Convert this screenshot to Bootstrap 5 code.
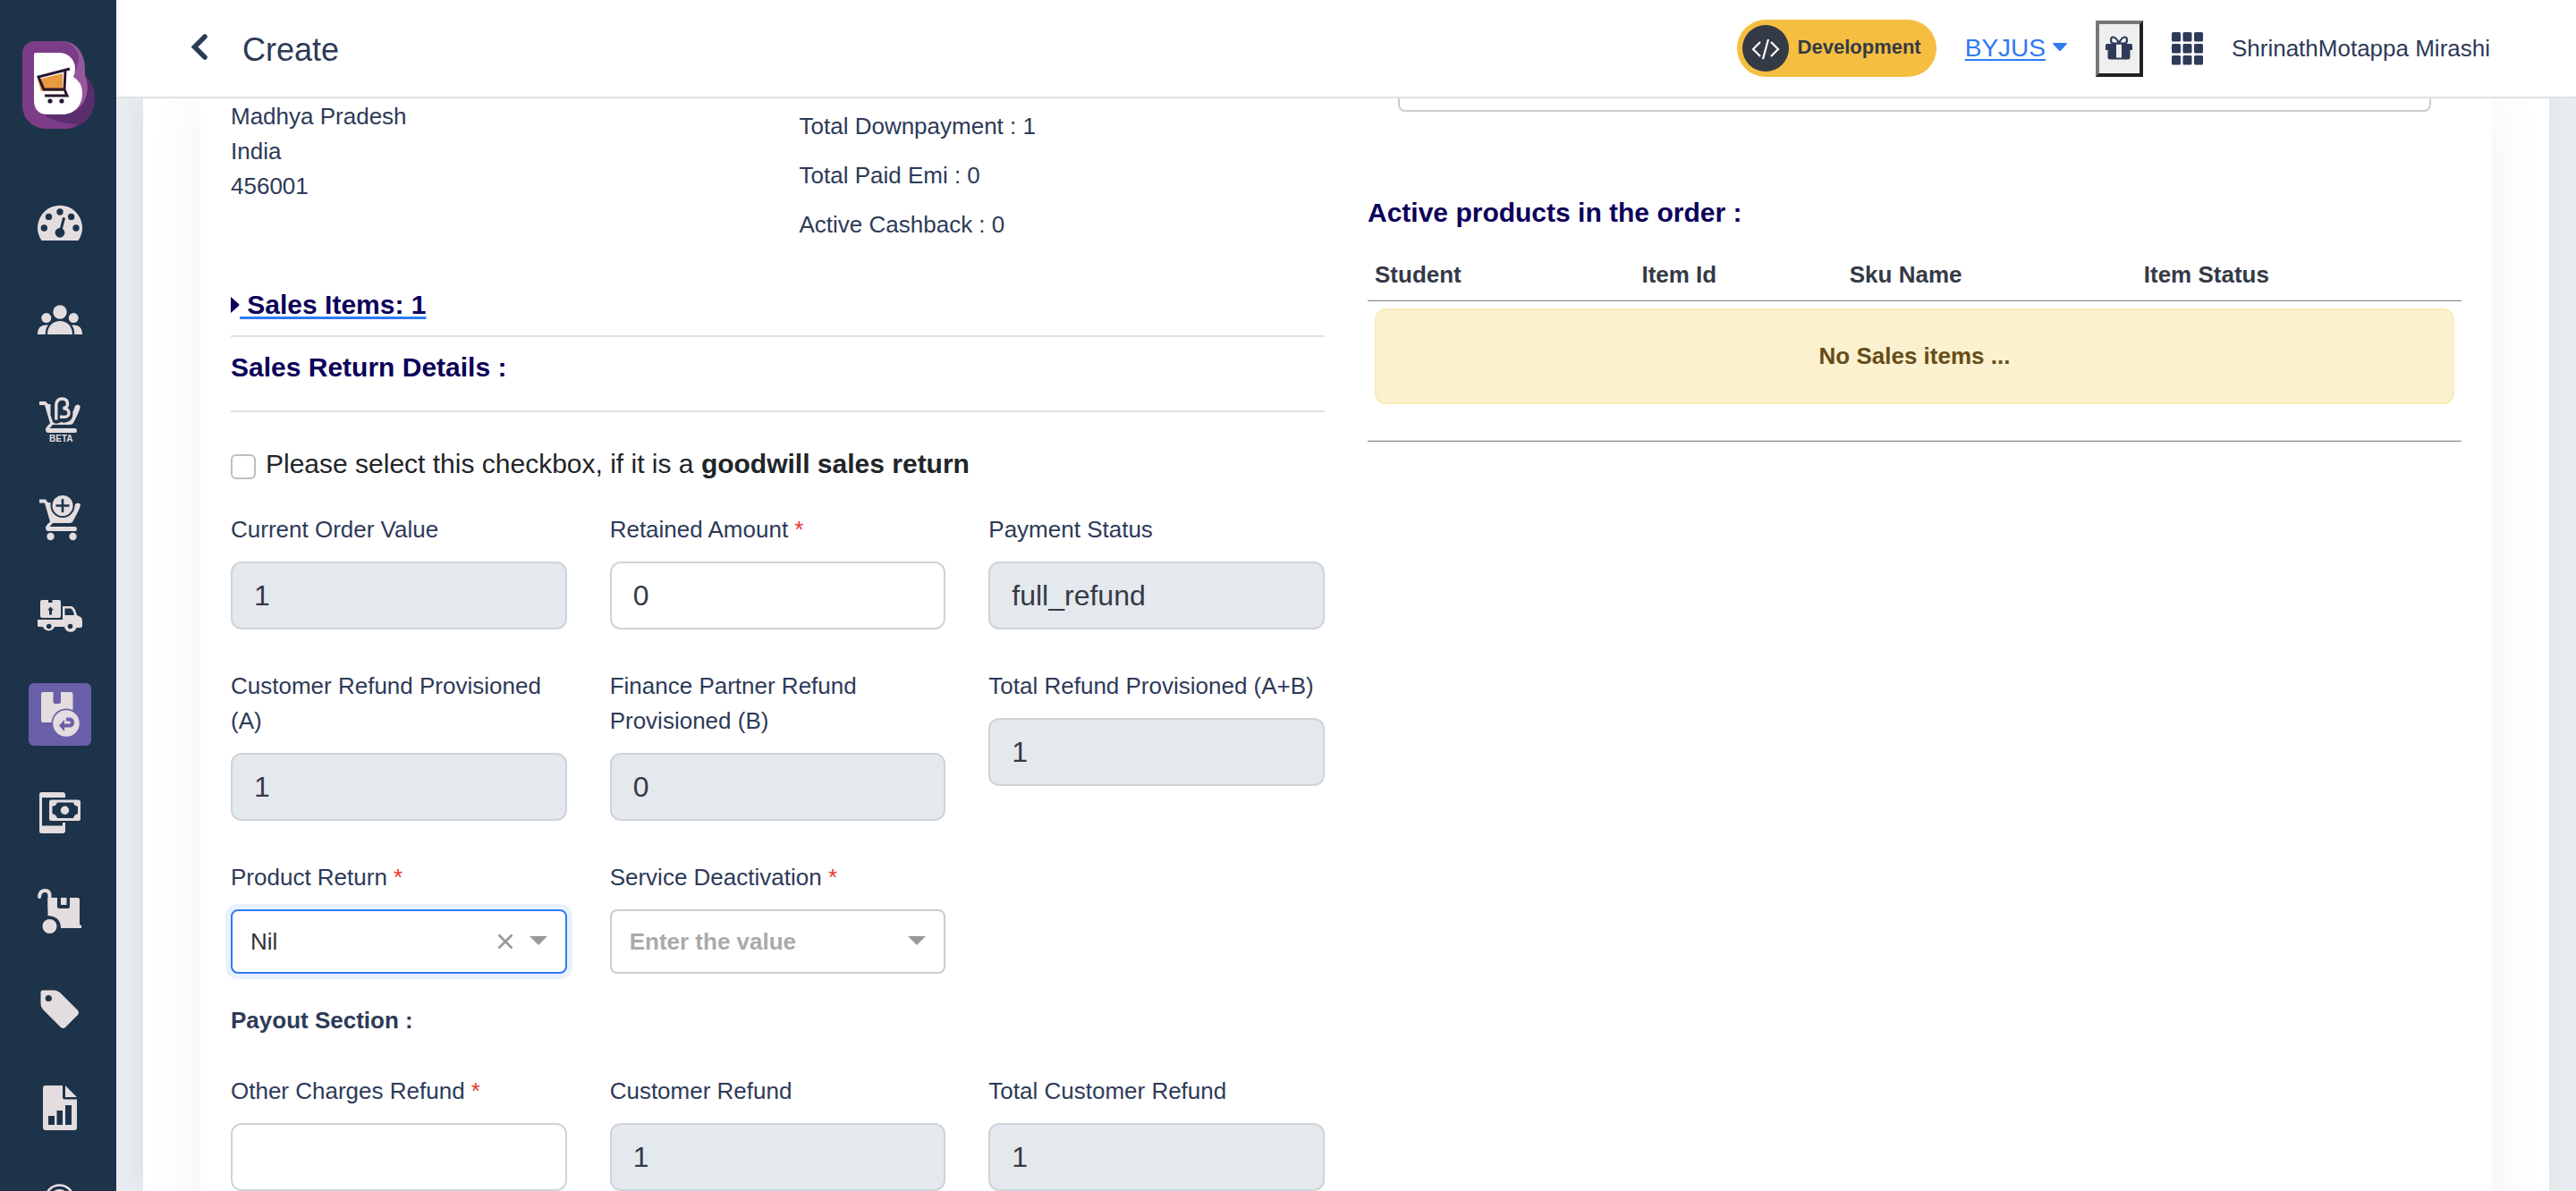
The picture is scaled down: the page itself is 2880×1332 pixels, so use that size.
<!DOCTYPE html>
<html lang="en">
<head>
<meta charset="utf-8">
<meta name="viewport" content="width=device-width, initial-scale=1">
<title>Create</title>
<link href="https://cdn.jsdelivr.net/npm/bootstrap@5.3.0/dist/css/bootstrap.min.css" rel="stylesheet">
<style>
  :root { --ink: #2d3a58; --slate: #343a46; --navy: #0c0059; --brand: #2f7af5; }
  body { font-family: "Liberation Sans", Arial, sans-serif; font-size: 26px; line-height: 39px; color: var(--ink); background: #e9edf1; }
  .side-rail { width: 130px; background: #1d334a; padding: 46px 0 0 25px; overflow: hidden; }
  .side-logo { width: 82px; height: 98px; margin-bottom: 70px; }
  .side-logo svg { display: block; }
  .rail-nav { gap: 40px; margin-left: 7px; }
  .rail-link { width: 70px; height: 70px; border-radius: 6px; display: flex; align-items: center; justify-content: center; color: #e4dddf; flex: none; }
  .rail-link.active { background: #6a5fa9; }
  .rail-link svg { width: 50px; height: 50px; fill: currentColor; overflow: visible; --hole: #1d334a; }
  .rail-link.active svg { --hole: #6a5fa9; }
  .top-bar { height: 110px; border-bottom: 2px solid #dee2e6; padding: 0 96px 0 83px; z-index: 2; }
  .page-title { font-size: 36px; line-height: 44px; margin: 4px 0 0 38px; font-weight: 400; }
  .top-tools { gap: 32px; }
  .env-pill { background: #f5be41; border-radius: 32px; height: 64px; padding: 0 17px 0 6px; gap: 10px; color: var(--slate); font-size: 22px; font-weight: 700; }
  .env-dot { width: 52px; height: 52px; border-radius: 50%; background: #343a46; display: flex; align-items: center; justify-content: center; }
  .env-pill span:last-child { margin-top: -3px; }
  .org-link { font-size: 28px; color: var(--brand); gap: 8px; text-decoration: none; margin-top: -2px; }
  .org-link span { text-decoration: underline; text-decoration-thickness: 2px; text-underline-offset: 3px; }
  .gift-btn { width: 53px; height: 63px; padding: 0; background: #efefef; border: 4px solid; border-color: #767676 #212121 #212121 #767676; display: flex; align-items: center; justify-content: center; }
  .outer-card { margin: 0 30px; background: #fff; box-shadow: 0 0 30px rgba(20,40,80,.07); padding: 0 64px; overflow: hidden; }
  .inner-card { background: #fff; box-shadow: 0 0 64px rgba(0,0,0,.055); padding: 1px 34px 60px; }
  .row-wide { --bs-gutter-x: 48px; }
  .ship-to { line-height: 39px; margin: 0; }
  .totals { padding-top: 11px; }
  .totals p { margin: 0 0 16px; }
  .sec-title { font-size: 30px; line-height: 45px; font-weight: 700; color: var(--navy); margin: 0; }
  .items-title { margin: 31px 0 12px; }
  .details-title { margin: 11px 0 26px; }
  .products-title { margin-top: 90px; }
  .sales-toggle { color: var(--navy); text-decoration: none; display: flex; align-items: center; }
  .sales-toggle span { text-decoration: underline 3px var(--brand); text-underline-offset: 3px; white-space: pre; }
  .rule { border: 0; border-top: 2px solid #dee2e6; opacity: 1; margin: 0; }
  .goodwill { font-size: 30px; line-height: 45px; color: #212529; gap: 11px; margin: 35px 0 32px; }
  .goodwill .form-check-input { width: 28px; height: 28px; margin: 7px 0 0; border: 2px solid #bfbfbf; border-radius: 6px; }
  .fld-row { margin-bottom: 44px; }
  .fld-label { display: block; margin-bottom: 16px; color: var(--ink); }
  .req { color: #e8372c; }
  .form-control.fld { height: 76px; font-size: 32px; line-height: 48px; padding: 0 24px; border: 2px solid #ced4da; border-radius: 12px; color: var(--slate); background: #fff; }
  .form-control.fld:disabled { background: #e4e9ed; opacity: 1; }
  .pick .form-select { height: 72px; font-size: 26px; line-height: 39px; padding: 0 80px 0 20px; border: 2px solid #ccc; border-radius: 8px; background: #fff; color: #333; }
  .pick .form-select.is-empty { color: #aaa; font-weight: 700; }
  .pick .form-select.is-open { border-color: var(--brand); box-shadow: 0 0 0 6px rgba(47,122,245,.1); }
  .pick-marks { position: absolute; right: 22px; top: 0; height: 100%; gap: 18px; display: flex; align-items: center; pointer-events: none; }
  .payout-title { font-size: 26px; line-height: 39px; font-weight: 700; margin: -11px 0 40px; }
  .note-box { height: 74px; border: 2px solid #ccc; border-radius: 8px; margin: -60px 34px 0; }
  .order-tbl { margin: 20px 0 0; color: var(--slate); font-size: 26px; table-layout: fixed; }
  .order-tbl > :not(caption) > * > * { padding: 8px 8px 10px; background: transparent; border: 0; box-shadow: inset 0 -1px #8a8e95, inset 0 -2px #dde1e5; }
  .order-tbl .w-student { width: 24.4%; }
  .order-tbl .w-item { width: 19%; }
  .order-tbl .w-sku { width: 26.9%; }
  .order-tbl .alert { margin: 0 0 32px; padding: 32px; border: 2px solid #fdebb7; border-radius: 12px; background: #fcf1cf; color: #664d19; font-weight: 700; text-align: center; }
</style>
<script src="https://cdn.jsdelivr.net/npm/bootstrap@5.3.0/dist/js/bootstrap.bundle.min.js"></script>
</head>
<body>
<div class="d-flex vh-100 overflow-hidden">
  <aside class="side-rail flex-shrink-0">
    <a class="side-logo d-block" href="#" aria-label="Home">
      <svg width="82" height="98" viewBox="0 0 82 98">
        <path d="M69 37 C77 44 81 53 81 64 C81 83 68 98 48 98 H27 C20 88 20 60 40 40Z" fill="#5a2d6c"/>
        <path d="M14 0 H45 C60 0 70 14 70 30 V38 C76 52 73 72 55 80 L20 60Z" fill="#96589c"/>
        <path d="M14 0 H45 C54 2 63 8 63 20 Q63 29 58 36 L18 72 C22 86 40 92 62 93 C58 96 54 98 48 98 H27 C11 98 0 86 0 72 V14 C0 6 6 0 14 0Z" fill="#7d3c87"/>
        <path d="M15 13 H42 C52 13 59 22 59 30 Q59 36 57 40 Q67 46 67 58 C67 73 57 82 45 82 H28 C18 82 13 76 13 66 V15 Q13 13 15 13Z" fill="#fff"/>
        <path d="M17 43 L45 36 V56 H21Z" fill="#e9993f"/>
        <path d="M53 31 L18 40 L24 54 H46 M48 33 L47 54 L50 61 H25" fill="none" stroke="#2a1630" stroke-width="3"/>
        <circle cx="31" cy="67" r="2.6" fill="#2a1630"/><circle cx="44" cy="67" r="2.6" fill="#2a1630"/>
      </svg>
    </a>
    <nav class="rail-nav d-flex flex-column">
      <a class="rail-link" href="#" aria-label="Dashboard"><svg viewBox="0 0 50 50">
        <path d="M4.500 45 A25 25 0 1 1 45.500 45Z"/>
        <g fill="var(--hole)"><circle cx="7.300" cy="31" r="3.700"/><circle cx="12.500" cy="18.400" r="3.700"/><circle cx="25" cy="13" r="3.700"/><circle cx="37.600" cy="18.400" r="3.700"/><circle cx="43" cy="31" r="3.700"/><circle cx="25" cy="36.300" r="5.400"/></g>
        <path d="M25.500 35 L29.300 20.500" stroke="var(--hole)" stroke-width="3" stroke-linecap="round"/></svg></a>
      <a class="rail-link" href="#" aria-label="Customers"><svg viewBox="0 0 50 50">
        <circle cx="25" cy="15" r="7.700"/><circle cx="9.800" cy="21.600" r="5.500"/><circle cx="40.200" cy="21.600" r="5.500"/>
        <path d="M11 40 C11 20 39 20 39 40Z M0 40 C0 32 4 29 12 29.500 C9.500 32 8.800 36 8.800 40Z M50 40 C50 32 46 29 38 29.500 C40.500 32 41.200 36 41.200 40Z"/></svg></a>
      <a class="rail-link" href="#" aria-label="Orders beta"><svg viewBox="0 0 50 50">
        <path d="M2 5 H9 L12 8 H14.500 V20 L17 28 Q20 31 24 29 Q37 26 42 10 Q45 7 47.700 10 Q48 14 40 29 Q39 31 36 31 H17 L13.500 35 H42 Q44 35 44 37.500 T42 40 H12 Q9 40 9 36 Q9 34 14 29.500 L8 9 H2Z"/>
        <path d="M20.800 25.500 V8.500 Q21.500 2 27.500 2 Q34 2 34 8 Q34 11 31.500 13 Q36 15 36 19 Q36 25 28 25.500" fill="none" stroke="var(--hole)" stroke-width="7"/>
        <path d="M20.800 25.500 V8.500 Q21.500 2 27.500 2 Q33.500 2 33.500 8 Q33.500 12 28.500 12.500 Q35.500 13 35 19 Q34 23.500 25 22" fill="none" stroke="currentColor" stroke-width="3.400"/>
        <text x="13" y="50" font-family="Liberation Sans, sans-serif" font-size="10" font-weight="700">BETA</text></svg></a>
      <a class="rail-link" href="#" aria-label="New order"><svg viewBox="0 0 50 50">
        <path d="M2 4.500 H9 L11.500 8 H14.500 L16 17 Q22 26 31 24 Q39 22 42 10 Q45 7 48 10 Q48 14 40 28 Q39 31 36 31 H17 L13.500 35 H42 Q44 35 44 37.500 T42 40 H12 Q9 40 9 36 Q9 34 14 29.500 L8 8.500 H2Z"/>
        <circle cx="28" cy="11.500" r="13.500" fill="var(--hole)"/><circle cx="28" cy="11.500" r="11.500"/>
        <path d="M28 5 V18 M21.500 11.500 H34.500" stroke="var(--hole)" stroke-width="2.600" stroke-linecap="round"/>
        <circle cx="14.500" cy="46" r="4.200"/><circle cx="39.500" cy="46" r="4.200"/></svg></a>
      <a class="rail-link" href="#" aria-label="Shipments"><svg viewBox="0 0 50 50">
        <path d="M5 7 H12 V10 H16.500 V7 H24 Q26 7 26 9 V25 Q26 27 24 27 H5 Q3 27 3 25 V9 Q3 7 5 7Z"/>
        <path d="M28 14 H37 Q40 14 42 18 L44 24 L48 26 Q50 27 50 30 V36 Q50 38 48 38 H43.500 A7 7 0 0 1 30 37 H19 A7 7 0 0 1 6 37 H1.500 Q0 37 0 35.500 V29 H28Z"/>
        <path d="M30.500 16.500 H37 Q40 18 41 24 H30.500Z M14.500 14.500 L18 18.500 H16 V23.500 H13 V18.500 H11Z" fill="var(--hole)"/>
        <circle cx="12.700" cy="36.500" r="2.800" fill="var(--hole)"/><circle cx="36.500" cy="36.500" r="2.800" fill="var(--hole)"/></svg></a>
      <a class="rail-link active" href="#" aria-label="Sales returns" aria-current="page"><svg viewBox="0 0 50 50">
        <path d="M6 0 H17.500 V11 Q17.500 13 19.500 13 H24 Q26 13 26 11 V0 H37 Q39.500 0 39.500 2.500 V34 H6 Q4 34 4 32 V2 Q4 0 6 0Z"/>
        <circle cx="32" cy="35" r="16.500" fill="var(--hole)"/><circle cx="32" cy="35" r="14.800"/>
        <path d="M32 30.500 H35 Q39 30.500 39 34 Q39 37.500 35 37.500 H28" fill="none" stroke="var(--hole)" stroke-width="4"/>
        <path d="M30 31 V44 L24 37.500Z" fill="var(--hole)"/></svg></a>
      <a class="rail-link" href="#" aria-label="Payments"><svg viewBox="0 0 50 50">
        <path d="M4 2 H28 Q31 2 31 5 V8 H5 V39.500 H28 V36 H31 V45 Q31 48 28 48 H4 Q2 48 2 45.500 V4.500 Q2 2 4 2Z"/>
        <rect x="13" y="10.500" width="35" height="23.500" rx="2.500"/>
        <path d="M22 13.500 H40 Q40.500 17 45 18 V26 Q41 27 40 31 H22 Q21 27 16.500 26 V18 Q21 17 22 13.500Z" fill="var(--hole)"/><circle cx="30.500" cy="22.200" r="4.700"/></svg></a>
      <a class="rail-link" href="#" aria-label="Inventory"><svg viewBox="0 0 50 50">
        <path d="M2 9 Q2.500 2 8.500 2 Q13.500 2 13.500 8 V22" fill="none" stroke="currentColor" stroke-width="4" stroke-linecap="round"/>
        <path d="M11.500 10 H22 V20 Q22 22 24 22 H34 Q36 22 36 20 V10 H45 Q47 10 47 12 V40 L49 41 V44 H26 Q26 31 11.500 30Z"/>
        <rect x="26" y="10" width="6.500" height="8"/><circle cx="13.500" cy="42" r="8"/></svg></a>
      <a class="rail-link" href="#" aria-label="Offers"><svg viewBox="0 0 50 50">
        <path d="M6 3.500 H19 Q22 3.500 25 6 L45 26 Q47 28.500 45 31 L31 45 Q28.500 47 26 45 L6 25 Q3.500 22 3.500 19 V6 Q3.500 3.500 6 3.500Z"/><circle cx="12.300" cy="12.500" r="3.600" fill="var(--hole)"/></svg></a>
      <a class="rail-link" href="#" aria-label="Reports"><svg viewBox="0 0 50 50">
        <path d="M9 0 H28 V13 Q28 15.500 30 15.500 H44 V47 Q44 50 41 50 H9 Q6 50 6 47 V3 Q6 0 9 0Z M31 0 L44 13 H31Z"/>
        <path d="M12 34 H19 V44 H12Z M21.500 28 H28 V44 H21.500Z M31 22 H38 V44 H31Z" fill="var(--hole)"/></svg></a>
      <a class="rail-link" href="#" aria-label="Support"><svg viewBox="0 0 50 50">
        <circle cx="24.500" cy="17" r="15.500" fill="none" stroke="currentColor" stroke-width="2.600"/><circle cx="24.500" cy="17" r="11"/></svg></a>
    </nav>
  </aside>

  <div class="flex-grow-1 d-flex flex-column overflow-hidden">
    <header class="top-bar bg-white d-flex align-items-center justify-content-between flex-shrink-0">
      <div class="d-flex align-items-center">
        <a href="#" aria-label="Back"><svg class="d-block" width="20" height="32" viewBox="0 0 20 32"><path d="M16 3 L4.500 14.500 L16 26" fill="none" stroke="#2d3a58" stroke-width="5.500" stroke-linecap="round"/></svg></a>
        <h1 class="page-title">Create</h1>
      </div>
      <div class="top-tools d-flex align-items-center">
        <div class="env-pill d-flex align-items-center">
          <span class="env-dot"><svg width="32" height="26" viewBox="0 0 32 26"><path d="M10 6 L2 14 L10 22 M22 6 L30 14 L22 22 M19 3 L13 25" fill="none" stroke="#fff" stroke-width="2.200"/></svg></span>
          <span>Development</span>
        </div>
        <a class="org-link d-flex align-items-center" href="#"><span>BYJUS</span>
          <svg width="16" height="10" viewBox="0 0 16 10"><path d="M1 0 H15 Q16.500 .5 15.500 1.500 L9 8.500 Q8 9.500 7 8.500 L.5 1.500 Q-.5 .5 1 0Z" fill="#2f7af5"/></svg></a>
        <button class="gift-btn" type="button" aria-label="Rewards"><svg width="30" height="28" viewBox="0 0 30 28" fill="#2d3a58">
          <path d="M1.500 9 H28.500 Q30 9 30 11 V16 H0 V11 Q0 9 1.500 9Z M2.500 16 H27.500 V24 Q27.500 26.500 25 26.500 H5 Q2.500 26.500 2.500 24Z"/><rect x="12" y="9.500" width="6" height="15" fill="#efefef"/>
          <path d="M15 8.500 Q12 1.500 8.500 1.500 Q6 1.500 6 5 Q6 8.500 9 8.500Z M15 8.500 Q18 1.500 21.500 1.500 Q24 1.500 24 5 Q24 8.500 21 8.500Z" fill="none" stroke="#2d3a58" stroke-width="2.200"/></svg></button>
        <a href="#" aria-label="Apps"><svg class="d-block" width="35" height="37" viewBox="0 0 35 37" fill="#2d3a58"><rect width="10" height="10.500" rx="1.500"/><rect x="12.500" width="10" height="10.500" rx="1.500"/><rect x="25" width="10" height="10.500" rx="1.500"/><rect y="13" width="10" height="10.500" rx="1.500"/><rect x="12.500" y="13" width="10" height="10.500" rx="1.500"/><rect x="25" y="13" width="10" height="10.500" rx="1.500"/><rect y="26" width="10" height="10.500" rx="1.500"/><rect x="12.500" y="26" width="10" height="10.500" rx="1.500"/><rect x="25" y="26" width="10" height="10.500" rx="1.500"/></svg></a>
        <span>ShrinathMotappa Mirashi</span>
      </div>
    </header>

    <main class="overflow-hidden flex-grow-1">
      <div class="outer-card h-100">
        <div class="inner-card">
          <div class="row row-wide">
            <div class="col-6">
              <div class="row row-wide">
                <address class="col-6 ship-to">Madhya Pradesh<br>India<br>456001</address>
                <div class="col-6 totals">
                  <p>Total Downpayment : 1</p>
                  <p>Total Paid Emi : 0</p>
                  <p>Active Cashback : 0</p>
                </div>
              </div>
              <h2 class="sec-title items-title"><a class="sales-toggle" href="#"><svg width="10" height="18" viewBox="0 0 10 18"><path d="M0 0 L9 8 Q10 9 9 10 L0 18Z" fill="#0c0059"/></svg><span> Sales Items: 1</span></a></h2>
              <hr class="rule">
              <h2 class="sec-title details-title">Sales Return Details :</h2>
              <hr class="rule">
              <div class="goodwill d-flex align-items-center">
                <input class="form-check-input" type="checkbox" id="goodwill">
                <label for="goodwill">Please select this checkbox, if it is a <b>goodwill sales return</b></label>
              </div>

              <div class="row row-wide fld-row">
                <div class="col-4"><label class="fld-label" for="orderValue">Current Order Value</label><input class="form-control fld" id="orderValue" value="1" disabled></div>
                <div class="col-4"><label class="fld-label" for="retained">Retained Amount <span class="req">*</span></label><input class="form-control fld" id="retained" value="0"></div>
                <div class="col-4"><label class="fld-label" for="payStatus">Payment Status</label><input class="form-control fld" id="payStatus" value="full_refund" disabled></div>
              </div>
              <div class="row row-wide fld-row">
                <div class="col-4"><label class="fld-label" for="custProv">Customer Refund Provisioned (A)</label><input class="form-control fld" id="custProv" value="1" disabled></div>
                <div class="col-4"><label class="fld-label" for="finProv">Finance Partner Refund Provisioned (B)</label><input class="form-control fld" id="finProv" value="0" disabled></div>
                <div class="col-4"><label class="fld-label" for="totalProv">Total Refund Provisioned (A+B)</label><input class="form-control fld" id="totalProv" value="1" disabled></div>
              </div>
              <div class="row row-wide fld-row">
                <div class="col-4"><label class="fld-label" for="prodReturn">Product Return <span class="req">*</span></label>
                  <div class="pick position-relative"><select class="form-select is-open" id="prodReturn"><option>Nil</option></select>
                    <span class="pick-marks"><svg width="18" height="18" viewBox="0 0 18 18"><path d="M1.500 1.500 L16.500 16.500 M16.500 1.500 L1.500 16.500" stroke="#999" stroke-width="2.800"/></svg><svg width="20" height="12" viewBox="0 0 20 12"><path d="M0 0 H20 L10 10Z" fill="#999"/></svg></span></div></div>
                <div class="col-4"><label class="fld-label" for="deact">Service Deactivation <span class="req">*</span></label>
                  <div class="pick position-relative"><select class="form-select is-empty" id="deact"><option>Enter the value</option></select>
                    <span class="pick-marks"><svg width="20" height="12" viewBox="0 0 20 12"><path d="M0 0 H20 L10 10Z" fill="#999"/></svg></span></div></div>
              </div>
              <h3 class="payout-title">Payout Section :</h3>
              <div class="row row-wide fld-row">
                <div class="col-4"><label class="fld-label" for="otherRefund">Other Charges Refund <span class="req">*</span></label><input class="form-control fld" id="otherRefund"></div>
                <div class="col-4"><label class="fld-label" for="custRefund">Customer Refund</label><input class="form-control fld" id="custRefund" value="1" disabled></div>
                <div class="col-4"><label class="fld-label" for="totalRefund">Total Customer Refund</label><input class="form-control fld" id="totalRefund" value="1" disabled></div>
              </div>
            </div>

            <div class="col-6">
              <div class="note-box bg-white"></div>
              <h2 class="sec-title products-title">Active products in the order :</h2>
              <table class="table order-tbl">
                <colgroup><col class="w-student"><col class="w-item"><col class="w-sku"><col></colgroup>
                <thead><tr><th>Student</th><th>Item Id</th><th>Sku Name</th><th>Item Status</th></tr></thead>
                <tbody><tr><td colspan="4"><div class="alert">No Sales items ...</div></td></tr></tbody>
              </table>
            </div>
          </div>
        </div>
      </div>
    </main>
  </div>
</div>
</body>
</html>
